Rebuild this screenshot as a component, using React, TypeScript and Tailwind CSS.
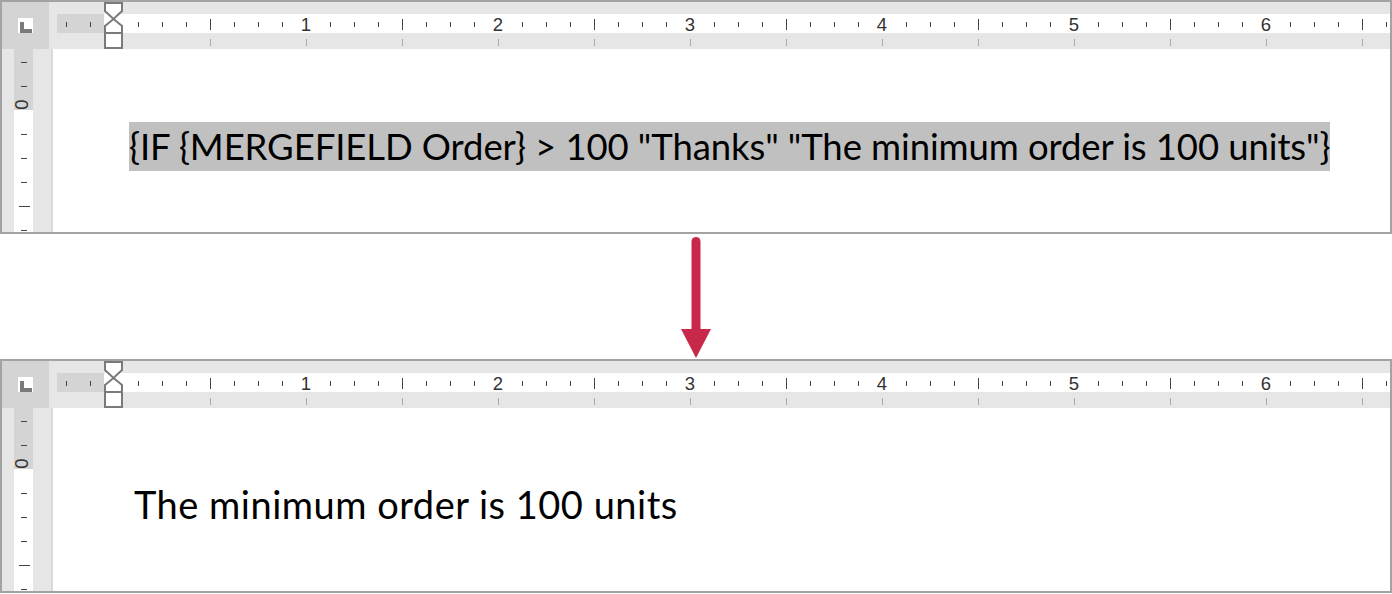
import React from 'react';

const PAGE_X = 114;
const STEP = 24;

function HRuler() {
  const ticks = [];
  for (let k = -2; k <= 53; k++) {
    if (k === 0) continue;
    const x = PAGE_X + STEP * k;
    if (k > 0 && k % 8 === 0) {
      ticks.push(
        <text
          key={k}
          x={x}
          y={31}
          textAnchor="middle"
          fontSize="18.5"
          fontFamily="'Liberation Sans', Arial, sans-serif"
          fill="#333333"
        >
          {k / 8}
        </text>,
      );
    } else if (Math.abs(k) % 8 === 4) {
      ticks.push(<line key={k} x1={x + 0.5} x2={x + 0.5} y1={19} y2={30} stroke="#444444" strokeWidth="1" />);
    } else {
      ticks.push(<line key={k} x1={x + 0.5} x2={x + 0.5} y1={22} y2={27} stroke="#444444" strokeWidth="1" />);
    }
  }
  const tabs = [];
  for (let x = 210; x <= 1390; x += 96) {
    tabs.push(<line key={x} x1={x + 0.5} x2={x + 0.5} y1={39} y2={46} stroke="#a8a8a8" strokeWidth="1" />);
  }

  return (
    <div className="relative flex h-[47px] flex-1 flex-col bg-[#e6e6e6]">
      <div className="h-[12px]" />
      <div className="flex h-[19px]">
        <div className="w-[8px]" />
        <div className="w-[47px] bg-[#d4d4d4]" />
        <div className="flex-1 bg-white" />
      </div>
      <svg className="absolute inset-0 h-full w-full overflow-visible" viewBox="49 2 1341 47" preserveAspectRatio="xMinYMin slice">
        {ticks}
        {tabs}
        <g fill="#ffffff" stroke="#7a7a7a" strokeWidth="2" strokeLinejoin="miter">
          <path d="M105 3 H122 V11 L113.5 19 L105 11 Z" />
          <path d="M113.5 19 L122 26 V33 H105 V26 Z" />
          <path d="M105 33 H122 V48 H105 Z" />
        </g>
      </svg>
    </div>
  );
}

function VRuler() {
  const ticks = [];
  for (let k = -2; k <= 5; k++) {
    const y = 110 + STEP * k;
    if (k === 0) continue;
    if (k === 4) {
      ticks.push(<line key={k} x1={19} x2={30} y1={y + 0.5} y2={y + 0.5} stroke="#444444" strokeWidth="1" />);
    } else {
      ticks.push(<line key={k} x1={21} x2={27} y1={y + 0.5} y2={y + 0.5} stroke="#444444" strokeWidth="1" />);
    }
  }
  return (
    <div className="relative flex w-[51px]">
      <div className="w-[12px] bg-[#e6e6e6]" />
      <div className="flex w-[19px] flex-col">
        <div className="h-[61px] bg-[#d4d4d4]" />
        <div className="flex-1 bg-white" />
      </div>
      <div className="w-[18px] bg-[#e6e6e6]" />
      <div className="w-[2px] bg-[#d9d9d9]" />
      <svg className="absolute inset-0 h-full w-full overflow-visible" viewBox="2 49 51 183" preserveAspectRatio="xMinYMin slice">
        {ticks}
        <text
          x={0}
          y={0}
          transform="translate(28 104.5) rotate(-90)"
          textAnchor="middle"
          fontSize="18.5"
          fontFamily="'Liberation Sans', Arial, sans-serif"
          fill="#333333"
        >
          0
        </text>
      </svg>
    </div>
  );
}

function Corner() {
  return (
    <div className="flex h-[47px] w-[47px] items-start bg-[#d4d4d4] pl-[16px] pt-[16px]">
      <div className="relative h-[15px] w-[15px] bg-white">
        <div className="absolute left-[2px] top-[4px] h-[11px] w-[4px] bg-[#7a7a7a]" />
        <div className="absolute left-[2px] top-[11px] h-[4px] w-[12px] bg-[#7a7a7a]" />
      </div>
    </div>
  );
}

function Panel({ children, indent }: { children: React.ReactNode; indent: string }) {
  return (
    <div className="flex h-[234px] flex-col border-2 border-[#a3a3a3] bg-white">
      <div className="flex">
        <Corner />
        <HRuler />
      </div>
      <div className="flex flex-1">
        <VRuler />
        <div className={`flex-1 bg-white pt-[73px] ${indent}`}>{children}</div>
      </div>
    </div>
  );
}

export default function App() {
  return (
    <div className="flex h-[594px] w-[1392px] flex-col bg-white">
      <Panel indent="pl-[76px]">
        <span className="inline-block h-[49px] whitespace-pre bg-[#c0c0c0] font-['Lato','Open_Sans',sans-serif] text-[36.5px] leading-[49px] tracking-[-0.1px] text-black">
          {'{IF {MERGEFIELD Order} > 100 "Thanks" "The minimum order is 100 units"}'}
        </span>
      </Panel>
      <div className="flex h-[125px] justify-center pt-[3px]">
        <svg width="30" height="122" viewBox="0 0 30 122">
          <line x1="15" y1="4.5" x2="15" y2="94" stroke="#c8294b" strokeWidth="9" strokeLinecap="round" />
          <polygon points="0,92 30,92 15,121" fill="#c8294b" />
        </svg>
      </div>
      <Panel indent="pl-[81px]">
        <span className="inline-block h-[49px] whitespace-pre font-['Lato','Open_Sans',sans-serif] text-[38px] leading-[47px] tracking-[0.5px] text-black">
          The minimum order is 100 units
        </span>
      </Panel>
    </div>
  );
}
